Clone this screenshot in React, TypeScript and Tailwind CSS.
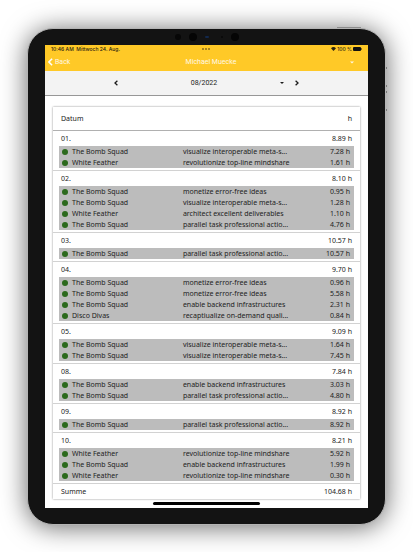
type Entry = {
  project: string;
  task: string;
  hours: string;
};

type Day = {
  day: string;
  total: string;
  entries: Entry[];
};

const BOMB = "The Bomb Squad";
const FEATHER = "White Feather";

const days: Day[] = [
  {
    day: "01.",
    total: "8.89 h",
    entries: [
      { project: BOMB, task: "visualize interoperable meta-s...", hours: "7.28 h" },
      { project: FEATHER, task: "revolutionize top-line mindshare", hours: "1.61 h" },
    ],
  },
  {
    day: "02.",
    total: "8.10 h",
    entries: [
      { project: BOMB, task: "monetize error-free ideas", hours: "0.95 h" },
      { project: BOMB, task: "visualize interoperable meta-s...", hours: "1.28 h" },
      { project: FEATHER, task: "architect excellent deliverables", hours: "1.10 h" },
      { project: BOMB, task: "parallel task professional actio...", hours: "4.76 h" },
    ],
  },
  {
    day: "03.",
    total: "10.57 h",
    entries: [{ project: BOMB, task: "parallel task professional actio...", hours: "10.57 h" }],
  },
  {
    day: "04.",
    total: "9.70 h",
    entries: [
      { project: BOMB, task: "monetize error-free ideas", hours: "0.96 h" },
      { project: BOMB, task: "monetize error-free ideas", hours: "5.58 h" },
      { project: BOMB, task: "enable backend infrastructures", hours: "2.31 h" },
      { project: "Disco Divas", task: "recaptiualize on-demand quali...", hours: "0.84 h" },
    ],
  },
  {
    day: "05.",
    total: "9.09 h",
    entries: [
      { project: BOMB, task: "visualize interoperable meta-s...", hours: "1.64 h" },
      { project: BOMB, task: "visualize interoperable meta-s...", hours: "7.45 h" },
    ],
  },
  {
    day: "08.",
    total: "7.84 h",
    entries: [
      { project: BOMB, task: "enable backend infrastructures", hours: "3.03 h" },
      { project: BOMB, task: "parallel task professional actio...", hours: "4.80 h" },
    ],
  },
  {
    day: "09.",
    total: "8.92 h",
    entries: [{ project: BOMB, task: "parallel task professional actio...", hours: "8.92 h" }],
  },
  {
    day: "10.",
    total: "8.21 h",
    entries: [
      { project: FEATHER, task: "revolutionize top-line mindshare", hours: "5.92 h" },
      { project: BOMB, task: "enable backend infrastructures", hours: "1.99 h" },
      { project: FEATHER, task: "revolutionize top-line mindshare", hours: "0.30 h" },
    ],
  },
];

function Chevron({ className, left = false }: { className: string; left?: boolean }) {
  return (
    <svg viewBox="0 0 6 10" className={className} fill="none" stroke="currentColor" aria-hidden="true">
      <path d={left ? "M5 1 1 5l4 4" : "M1 1l4 4-4 4"} strokeWidth="2" />
    </svg>
  );
}

/* Heavier arrow used next to the month */
function MonthArrow({ left = false }: { left?: boolean }) {
  return (
    <svg viewBox="0 0 4 6" className="h-[6px] w-1" fill="none" stroke="currentColor" aria-hidden="true">
      <path d={left ? "M3.4.8 1 3l2.4 2.2" : "M.6.8 3 3 .6 5.2"} strokeWidth="1.3" />
    </svg>
  );
}

function Caret({ className }: { className: string }) {
  return (
    <svg viewBox="0 0 6 3" className={className} fill="currentColor" aria-hidden="true">
      <path d="M0 0h6L3 3z" />
    </svg>
  );
}

/* Camera and sensors in the top bezel */
function Sensors() {
  return (
    <div className="flex h-4 items-center justify-center gap-3" aria-hidden="true">
      <span className="-mr-1 size-[6px] rounded-full bg-[#070707]" />
      <span className="-mr-1 size-[8px] rounded-full bg-[#050505]" />
      <span className="h-[2px] w-[4px] rounded-full bg-[#12284d]" />
      <span className="-mr-1 size-[2px] rounded-full bg-[#080808]" />
      <span className="size-[8px] rounded-full bg-[#050505]" />
    </div>
  );
}

function StatusBar() {
  return (
    <div className="grid h-2 grid-cols-3 items-center px-[6px] font-['Inter',sans-serif] text-[5px] leading-[8px] font-medium text-[#2b2410]">
      <span className="whitespace-pre">10:46 AM  Mittwoch 24. Aug.</span>
      <span className="flex justify-center gap-px">
        <i className="size-[2px] rounded-full bg-[#8a6d1c]" />
        <i className="size-[2px] rounded-full bg-[#8a6d1c]" />
        <i className="size-[2px] rounded-full bg-[#8a6d1c]" />
      </span>
      <span className="flex items-center justify-end gap-px">
        <svg viewBox="0 0 10 8" className="h-1 w-[5px]" fill="currentColor" aria-hidden="true">
          <path d="M0 2.5C3 -.8 7 -.8 10 2.5L5 8z" />
        </svg>
        <span>100 %</span>
        <svg viewBox="0 0 9 4" className="h-1 w-[9px]" aria-hidden="true">
          <rect width="8" height="4" rx="1" fill="#111" />
          <rect x="8.4" y="1.2" width=".6" height="1.6" fill="#111" />
        </svg>
      </span>
    </div>
  );
}

function TitleBar() {
  return (
    <div className="grid h-[18px] grid-cols-3 items-center pr-[14px] pl-[3px] font-['Roboto',sans-serif] text-[7px] text-[#fff8e3]">
      <button type="button" className="flex items-center gap-[2px]">
        <Chevron left className="h-2 w-[5px] text-white" />
        Back
      </button>
      <h1 className="pl-5 text-center whitespace-nowrap">Michael Muecke</h1>
      <button type="button" aria-label="Menu" className="justify-self-end">
        <Caret className="h-[3px] w-1" />
      </button>
    </div>
  );
}

function MonthBar() {
  return (
    <div className="flex h-[25px] items-center justify-between border-b border-[#979797] bg-[#f3f3f3] px-[69px] text-[#1c1c1c]">
      <button type="button" aria-label="Previous month">
        <MonthArrow left />
      </button>
      <div className="flex flex-1 items-center pr-[11px] pl-[10px]">
        <select
          aria-label="Month"
          defaultValue="08/2022"
          className="flex-1 appearance-none text-center font-['Roboto',sans-serif] text-[7px] leading-3"
        >
          <option>07/2022</option>
          <option>08/2022</option>
        </select>
        <Caret className="h-[2px] w-1" />
      </div>
      <button type="button" aria-label="Next month">
        <MonthArrow />
      </button>
    </div>
  );
}

function DayEntries({ day, entries }: { day: string; entries: Entry[] }) {
  return (
    <table aria-label={`Entries ${day}`} className="w-full table-fixed bg-[#bcbcbc]">
      <tbody>
        {entries.map((entry, idx) => (
          <tr key={idx} className="h-[11px] leading-[11px]">
            <td className="w-[42%] p-0 pl-[3px]">
              <span className="flex items-center gap-[4px]">
                <span className="size-[6px] rounded-full bg-[#2c6a1d]" />
                {entry.project}
              </span>
            </td>
            <td className="p-0 whitespace-nowrap">{entry.task}</td>
            <td className="w-10 p-0 pr-1 text-right">{entry.hours}</td>
          </tr>
        ))}
      </tbody>
    </table>
  );
}

function Timesheet() {
  return (
    <table className="w-full border-separate border-spacing-0 bg-white text-[7px] leading-[15px] text-[#222] shadow-[0_0_2px_rgba(0,0,0,0.45)]">
      <thead>
        <tr className="h-[23px]">
          <th className="p-0 pl-2 text-left font-normal">Datum</th>
          <th className="p-0 pr-2 text-right font-normal">h</th>
        </tr>
      </thead>
      {days.map(({ day, total, entries }, idx) => {
        const line = idx === 0 ? "border-[#b0b0b0]" : "border-[#d2d2d2]";
        return (
          <tbody key={day}>
            <tr>
              <td className={`border-t p-0 pl-2 ${line}`}>{day}</td>
              <td className={`border-t p-0 pr-2 text-right ${line}`}>{total}</td>
            </tr>
            <tr>
              <td colSpan={2} className="px-[6px] pt-0 pb-[2px]">
                <DayEntries day={day} entries={entries} />
              </td>
            </tr>
          </tbody>
        );
      })}
      <tfoot>
        <tr>
          <td className="border-t border-[#d2d2d2] p-0 pl-2">Summe</td>
          <td className="border-t border-[#d2d2d2] p-0 pr-2 text-right">104.68 h</td>
        </tr>
      </tfoot>
    </table>
  );
}

export default function App() {
  return (
    <div className="min-h-screen bg-white px-[27px] py-7 font-['Noto_Sans',sans-serif]">
      <div className="relative rounded-[26px] border border-[#b4b4b4] bg-[#131313] px-[17px] pb-4 shadow-[0_2px_26px_rgba(0,0,0,0.6)]">
        {/* Hardware buttons on the frame */}
        <span className="absolute -top-[2px] right-6 h-px w-6 bg-[#8c8c8c]" />
        <span className="absolute top-[38px] -right-[2px] h-[2px] w-px bg-[#777]" />
        <span className="absolute top-14 -right-[2px] h-[2px] w-px bg-[#777]" />
        <span className="absolute top-[62px] -right-[2px] h-[2px] w-px bg-[#777]" />
        <span className="absolute top-20 -right-[2px] h-[2px] w-px bg-[#777]" />
        <Sensors />
        <div className="bg-white">
          <header className="bg-[#ffc927]">
            <StatusBar />
            <TitleBar />
          </header>
          <MonthBar />
          <main className="px-2 pt-[11px]">
            <Timesheet />
          </main>
          <div className="flex h-[9px] items-center justify-center">
            <span className="h-[3px] w-1/3 rounded-full bg-black" />
          </div>
        </div>
      </div>
    </div>
  );
}
